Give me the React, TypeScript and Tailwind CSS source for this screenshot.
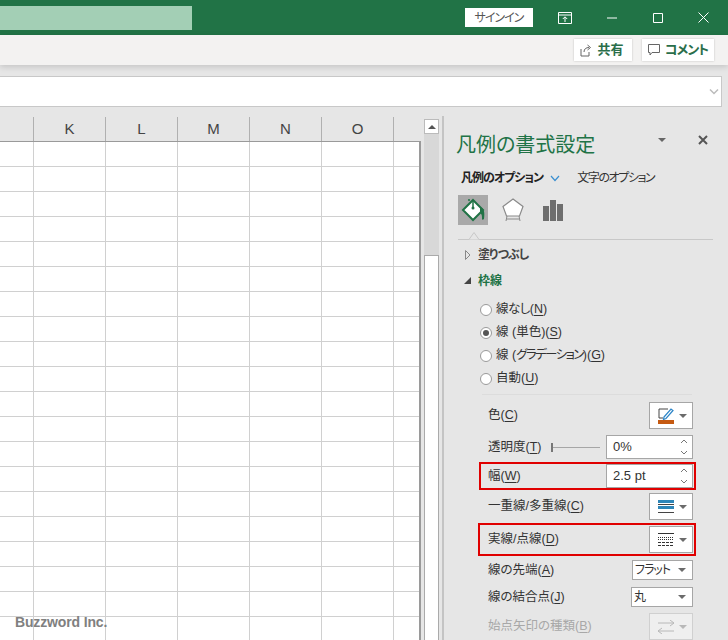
const font = "font-['Liberation_Sans','Noto_Sans_CJK_JP',sans-serif] [font-feature-settings:'palt']";

const columns = ['K', 'L', 'M', 'N', 'O'];
const rowCount = 20;

function U({ children }: { children: string }) {
  return <span className="underline underline-offset-2">{children}</span>;
}

function Caret({ className = 'border-t-[#6b6b6b]' }: { className?: string }) {
  return <span className={`w-0 h-0 border-x-[4px] border-x-transparent border-t-[4px] ${className}`} />;
}

function Spinner() {
  return (
    <svg width="8" height="20" viewBox="0 0 8 20" className="text-[#777]">
      <path d="M1 6 4 3 7 6M1 14 4 17 7 14" fill="none" stroke="currentColor" strokeWidth="1" />
    </svg>
  );
}

function Radio({ checked, label }: { checked?: boolean; label: React.ReactNode }) {
  return (
    <div className="h-[23px] flex items-center pl-[36px] gap-[4px]">
      <span className="w-[12px] h-[12px] rounded-full border border-[#9a9a9a] bg-white flex items-center justify-center">
        {checked && <span className="w-[6px] h-[6px] rounded-full bg-[#555]" />}
      </span>
      <span>{label}</span>
    </div>
  );
}

function IconDrop({ children }: { children: React.ReactNode }) {
  return (
    <div className="w-[44px] h-[27px] border border-[#a6a6a6] bg-white flex items-center pl-[8px] gap-[5px]">
      {children}
      <Caret />
    </div>
  );
}

function SpinBox({ value }: { value: string }) {
  return (
    <div className="w-[87px] h-[24px] border border-[#a6a6a6] bg-white flex items-center justify-between pl-[6px] pr-[4px] text-[13px] text-[#333]">
      <span>{value}</span>
      <Spinner />
    </div>
  );
}

function TextDrop({ value, width }: { value: string; width: string }) {
  return (
    <div className={`${width} h-[20px] border border-[#a6a6a6] bg-white flex items-center justify-between pl-[2px] pr-[6px] text-[12px]`}>
      <span className="whitespace-nowrap tracking-[-1px]">{value}</span>
      <Caret />
    </div>
  );
}

export default function App() {
  return (
    <div className={`${font} relative w-[728px] h-[640px] overflow-hidden bg-[#e6e6e6] flex flex-col text-[#333]`}>
      {/* title bar */}
      <div className="h-[35px] shrink-0 bg-[#217346] flex items-center">
        <div className="w-[192px] h-[24px] bg-[#a3cfb5]" />
        <div className="ml-[273px] w-[68px] h-[19px] bg-white text-[#555] text-[12px] tracking-[-1px] flex items-center justify-center">サインイン</div>
        <svg width="14" height="14" viewBox="0 0 14 14" className="ml-[25px] text-white">
          <path d="M.5 1.500h13v11H.5zM.5 4h13M7 11V6M4.800 8 7 5.800 9.200 8" fill="none" stroke="currentColor" />
        </svg>
        <svg width="10" height="10" viewBox="0 0 10 10" className="ml-[35px] text-white">
          <path d="M0 5h10" stroke="currentColor" />
        </svg>
        <svg width="10" height="10" viewBox="0 0 10 10" className="ml-[36px] text-white">
          <path d="M.5.5h9v9h-9z" fill="none" stroke="currentColor" />
        </svg>
        <svg width="11" height="11" viewBox="0 0 11 11" className="ml-[35px] text-white">
          <path d="M.5.5l10 10M10.500.5l-10 10" stroke="currentColor" />
        </svg>
      </div>

      {/* ribbon strip */}
      <div className="h-[30px] shrink-0 bg-[#f3f2f1] flex items-center justify-end pr-[14px] gap-[10px] shadow-[0_2px_6px_rgba(0,0,0,0.15)] z-10">
        <div className="w-[58px] h-[22px] bg-white shadow-[0_0_2px_rgba(0,0,0,0.2)] flex items-center justify-center gap-[5px] pr-[2px] text-[13px] font-bold text-[#2a6e4a]">
          <svg width="12" height="13" viewBox="0 0 12 13" className="text-[#666]">
            <path d="M1 5v7h8V8M4 8c0-3 2-4.500 5-4.500M7.500 1 10.500 3.500 7.500 6" fill="none" stroke="currentColor" />
          </svg>
          共有
        </div>
        <div className="w-[72px] h-[22px] bg-white shadow-[0_0_2px_rgba(0,0,0,0.2)] flex items-center justify-center gap-[5px] text-[13px] tracking-[-1px] font-bold text-[#2a6e4a]">
          <svg width="12" height="12" viewBox="0 0 12 12" className="text-[#666]">
            <path d="M.5.5h11v8H4L2 11V8.500H.5z" fill="none" stroke="currentColor" />
          </svg>
          コメント
        </div>
      </div>

      {/* formula bar */}
      <div className="mt-[11px] h-[31px] shrink-0 w-[722px] bg-white border-y border-r border-[#c8c8c8] flex items-center justify-end pr-[2px]">
        <svg width="10" height="7" viewBox="0 0 10 7" className="text-[#bbb]">
          <path d="M1 1.500 5 5.500 9 1.500" fill="none" stroke="currentColor" strokeWidth="1.500" />
        </svg>
      </div>

      <div className="flex-1 min-h-0 flex mt-[10px]">
        {/* sheet */}
        <div className="w-[421px] shrink-0 flex flex-col">
          <div className="h-[25px] shrink-0 flex border-b border-[#9a9a9a] text-[15px] text-[#444]">
            <div className="w-[34px] border-r border-[#b0b0b0]" />
            {columns.map(c => (
              <div key={c} className="w-[72px] shrink-0 border-r border-[#b0b0b0] flex items-center justify-center">{c}</div>
            ))}
          </div>
          <div className="flex-1 bg-white overflow-hidden border-r-2 border-[#9a9a9a]">
            {Array.from({ length: rowCount }).map((_, r) => (
              <div key={r} className="h-[25px] flex border-b border-[#d0d0d0]">
                <div className="w-[34px] shrink-0 border-r border-[#d0d0d0]" />
                {columns.map(c => (
                  <div key={c} className="w-[72px] shrink-0 border-r border-[#d0d0d0]" />
                ))}
              </div>
            ))}
          </div>
        </div>

        {/* scrollbar */}
        <div className="w-[21px] shrink-0 pl-[3px] flex flex-col">
          <div className="w-[15px] h-[15px] mt-[2px] shrink-0 bg-white border border-[#bbb] flex items-center justify-center">
            <span className="w-0 h-0 border-x-[4px] border-x-transparent border-b-[4px] border-b-[#555]" />
          </div>
          <div className="w-[15px] flex-1 bg-[#d8d8d8] flex flex-col pt-[121px]">
            <div className="flex-1 bg-white border-x border-t border-[#aaa]" />
          </div>
        </div>

        {/* format pane */}
        <div className="flex-1 min-w-0 border-l-2 border-[#c4c4c4] -mt-[1px] flex flex-col text-[12.500px]">
          <div className="h-[38px] shrink-0 pl-[12px] pr-[20px] pt-[13px] flex items-start">
            <span className="mt-[2px] text-[20px] leading-[28px] text-[#217346] whitespace-nowrap">凡例の書式設定</span>
            <span className="ml-auto mt-[9px] mr-[32px] flex"><Caret className="border-t-[#666]" /></span>
            <svg width="10" height="10" viewBox="0 0 10 10" className="mt-[6px] text-[#555]">
              <path d="M1 1l8 8M9 1l-8 8" stroke="currentColor" strokeWidth="2" />
            </svg>
          </div>
          <div className="h-[26px] mt-[11px] shrink-0 pl-[17px] flex items-center text-[12px]">
            <span className="font-bold text-[#222] tracking-[-1px]">凡例のオプション</span>
            <svg width="10" height="7" viewBox="0 0 10 7" className="ml-[7px] text-[#3a8fd0]">
              <path d="M1 1 5 5.500 9 1" fill="none" stroke="currentColor" strokeWidth="1.200" />
            </svg>
            <span className="ml-[17px] tracking-[-1.400px]">文字のオプション</span>
          </div>
          <div className="flex items-center pl-[14px] mt-[1px] shrink-0 h-[36px]">
            <div className="w-[30px] h-[30px] bg-[#a9a9a9] flex items-center justify-center">
              <svg width="26" height="26" viewBox="0 0 26 26">
                <path d="M3 13 13 3l10 10-10 10z" fill="#fff" stroke="#217346" strokeWidth="2" />
                <path d="M9 2v2M13 3v7" stroke="#217346" strokeWidth="1.500" />
                <circle cx="13" cy="11" r="1.500" fill="#217346" />
                <path d="M20 10c4 1 5 5 4 12-1 1-2 1-2 0 0-3 0-5-2-6z" fill="#217346" />
              </svg>
            </div>
            <svg width="24" height="26" viewBox="0 0 24 26" className="ml-[13px]">
              <path d="M12 2 22 9.500 18.500 19h-13L2 9.500z" fill="#fff" stroke="#8a8a8a" strokeWidth="1.200" />
              <path d="M6 19 5 24M18 19l1 5M5.500 22h13" stroke="#8a8a8a" fill="none" />
            </svg>
            <svg width="20" height="21" viewBox="0 0 20 21" className="ml-[18px] text-[#6e6e6e]">
              <path d="M0 6h6v15H0zM7 0h6v21H7zM14 4h6v17h-6z" fill="currentColor" />
            </svg>
          </div>
          <div className="mt-[11px] ml-[14px] mr-[15px] border-t border-[#c8c8c8] shrink-0 relative">
            <svg width="14" height="8" viewBox="0 0 14 8" className="absolute left-[9px] -top-[8px]">
              <path d="M0 7.500h2L7 .5l5 7h2" fill="#e6e6e6" stroke="#c8c8c8" />
            </svg>
          </div>
          <div className="h-[29px] shrink-0 pl-[21px] flex items-center gap-[7px] font-bold text-[#444] text-[12px]">
            <svg width="6" height="10" viewBox="0 0 6 10"><path d="M.5.5 5 5 .5 9.500z" fill="none" stroke="#888" /></svg>
            <span className="tracking-[-1px]">塗りつぶし</span>
          </div>
          <div className="h-[23px] shrink-0 pl-[20px] flex items-center gap-[7px] font-bold text-[#217346] text-[12px]">
            <svg width="7" height="7" viewBox="0 0 7 7"><path d="M7 0v7H0z" fill="#444" /></svg>
            枠線
          </div>
          <div className="mt-[6px] shrink-0">
            <Radio label={<><span className="tracking-[-0.500px]">線なし</span>(<U>N</U>)</>} />
            <Radio checked label={<>線 (単色)(<U>S</U>)</>} />
            <Radio label={<>線 (<span className="tracking-[-1.600px]">グラデーション</span>)(<U>G</U>)</>} />
            <Radio label={<>自動(<U>U</U>)</>} />
          </div>
          <div className="mt-[4px] ml-[38px] mr-[36px] border-t border-[#dcdcdc] shrink-0" />

          <div className="shrink-0 pl-[44px] pr-[35px] mt-[7px] flex flex-col">
            <div className="h-[27px] flex items-center justify-between">
              <span>色(<U>C</U>)</span>
              <IconDrop>
                <svg width="16" height="18" viewBox="0 0 16 18">
                  <path d="M1 11V2h9M1 11h4" fill="none" stroke="#444" />
                  <path d="M6 10 13 2l2 1.500-7 8-2.500 1z" fill="#fff" stroke="#2e86c8" strokeWidth="1.200" />
                  <path d="M0 13h16v4H0z" fill="#c55a11" />
                </svg>
              </IconDrop>
            </div>
            <div className="h-[24px] mt-[6px] flex items-center">
              <span>透明度(<U>T</U>)</span>
              <span className="ml-[10px] w-[2px] h-[9px] bg-[#777]" />
              <span className="w-[47px] h-px bg-[#a6a6a6]" />
              <span className="ml-auto"><SpinBox value="0%" /></span>
            </div>
          </div>

          <div className="shrink-0 mt-[3px] ml-[35px] mr-[32px] h-[28px] border-2 border-[#e00000] pl-[7px] pr-[1px] flex items-center justify-between box-border">
            <span>幅(<U>W</U>)</span>
            <SpinBox value="2.5 pt" />
          </div>

          <div className="shrink-0 pl-[44px] pr-[35px] mt-[3px] h-[27px] flex items-center justify-between">
            <span>一重線/多重線(<U>C</U>)</span>
            <IconDrop>
              <svg width="16" height="14" viewBox="0 0 16 14">
                <path d="M0 0h16v3H0zM0 6h16v3H0z" fill="#2e86b8" />
                <path d="M0 4h16v1H0zM0 12h16v1H0z" fill="#444" />
              </svg>
            </IconDrop>
          </div>

          <div className="shrink-0 mt-[3px] ml-[34px] mr-[32px] h-[33px] border-2 border-[#e00000] pl-[8px] pr-[1px] flex items-center justify-between box-border">
            <span>実線/点線(<U>D</U>)</span>
            <IconDrop>
              <svg width="16" height="14" viewBox="0 0 16 14">
                <path d="M0 .5h16" stroke="#333" />
                <path d="M0 4.500h16M0 6.500h16" stroke="#333" strokeDasharray="1 1" />
                <path d="M0 9.500h16M0 12.500h16" stroke="#333" strokeDasharray="3 1" />
              </svg>
            </IconDrop>
          </div>

          <div className="shrink-0 pl-[44px] pr-[35px] mt-[4px] flex flex-col">
            <div className="h-[20px] flex items-center justify-between">
              <span>線の先端(<U>A</U>)</span>
              <TextDrop value="フラット" width="w-[61px]" />
            </div>
            <div className="h-[20px] mt-[7px] flex items-center justify-between">
              <span>線の結合点(<U>J</U>)</span>
              <TextDrop value="丸" width="w-[62px]" />
            </div>
            <div className="h-[27px] mt-[6px] flex items-center justify-between text-[#a8a8a8]">
              <span>始点矢印の種類(<U>B</U>)</span>
              <div className="w-[44px] h-[27px] border border-[#d0d0d0] bg-[#efefef] flex items-center pl-[8px] gap-[5px]">
                <svg width="16" height="14" viewBox="0 0 16 14">
                  <path d="M0 3h16M12 0l4 3-4 3M0 11h16M4 8l-4 3 4 3" fill="none" stroke="#b8b8b8" />
                </svg>
                <Caret className="border-t-[#b8b8b8]" />
              </div>
            </div>
          </div>
        </div>
      </div>

      {/* watermark */}
      <div className="absolute left-[15px] top-[612px] text-[14px] font-bold text-[#808080] tracking-[-0.150px]">Buzzword Inc.</div>
    </div>
  );
}
